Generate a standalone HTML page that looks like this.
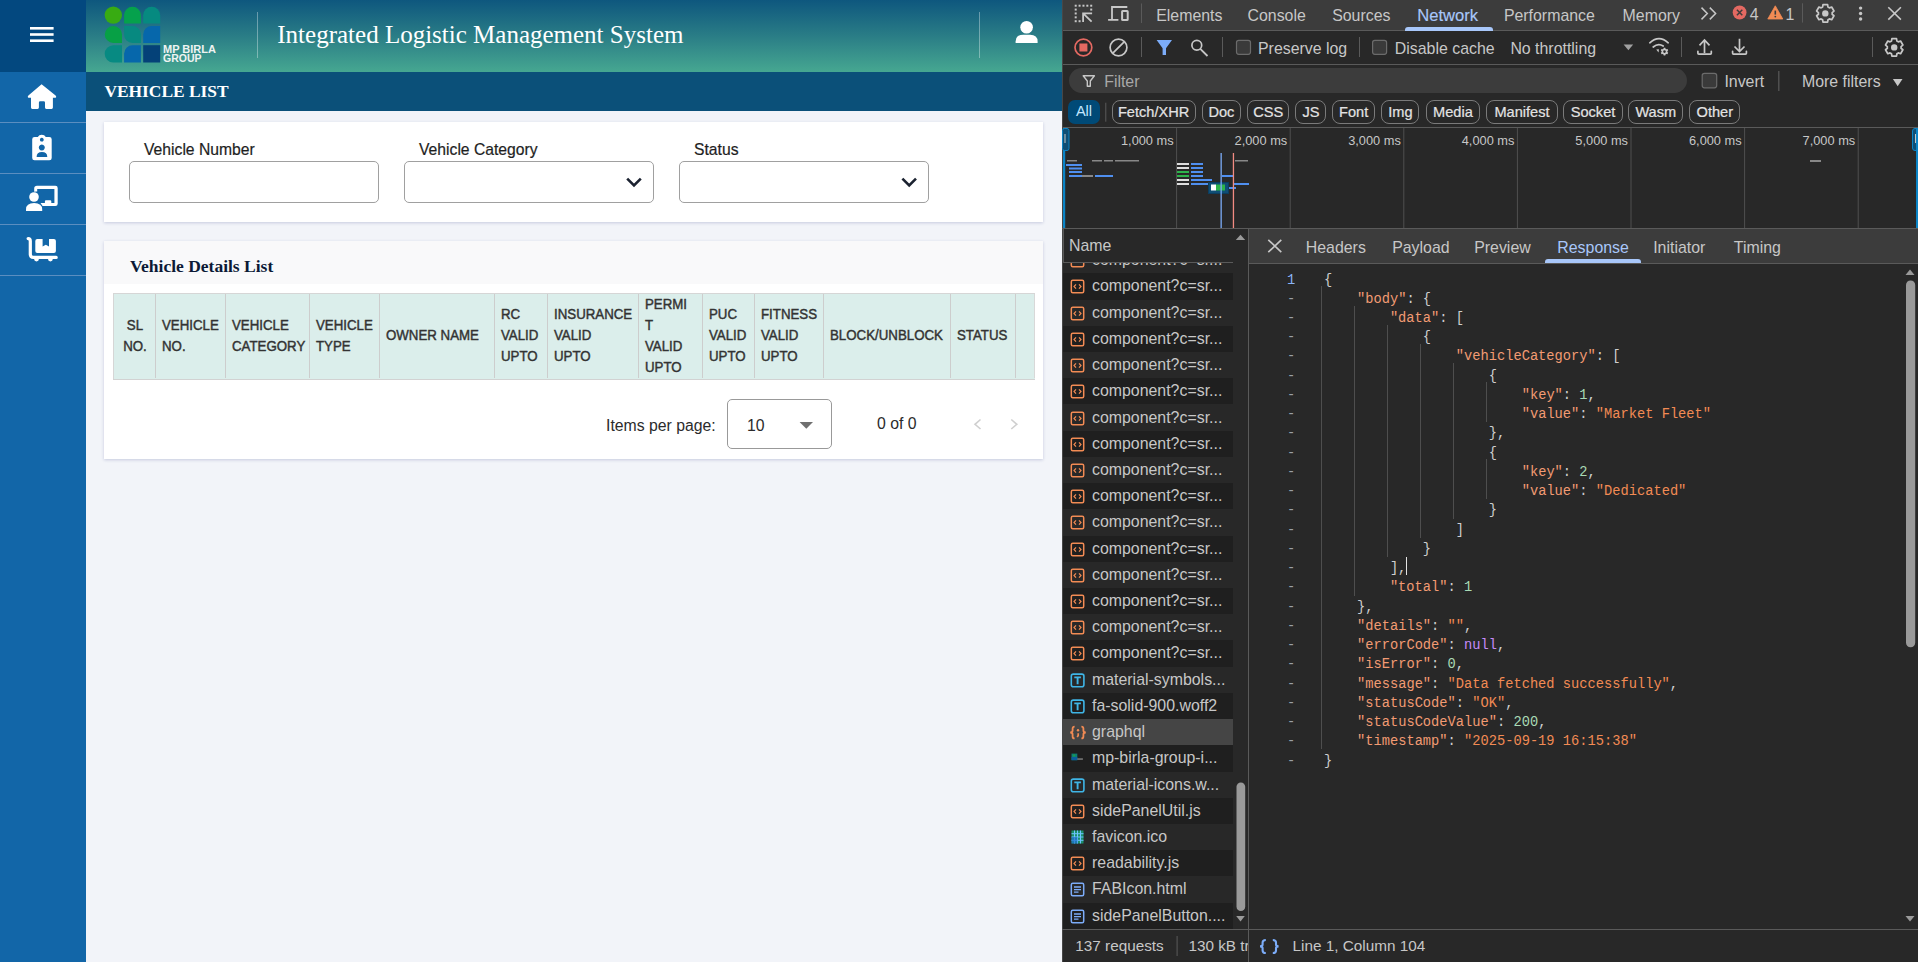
<!DOCTYPE html>
<html><head><meta charset="utf-8">
<style>
*{box-sizing:border-box;margin:0;padding:0}
html,body{width:1918px;height:962px;overflow:hidden;background:#f2f4f9;font-family:"Liberation Sans",sans-serif}
.a{position:absolute}
/* ---------- app ---------- */
#side{left:0;top:0;width:86px;height:962px;background:#1266a8}
#sidetop{left:0;top:0;width:86px;height:72px;background:#03487f}
.sep{left:0;width:86px;height:1px;background:#5b8ec0}
#hdr{left:86px;top:0;width:976px;height:72px;background:linear-gradient(#0e577e,#2a7d86 50%,#46a791)}
#ttlbar{left:86px;top:72px;width:976px;height:39px;background:#0b5079}
.title{font-family:"Liberation Serif",serif;color:#fff}
.card{background:#fff;box-shadow:0 1px 3px rgba(50,60,130,.22)}
.lbl{font-size:15.7px;color:#1e1e1e;-webkit-text-stroke:0.2px #1e1e1e}
.inp{height:42px;width:250px;border:1px solid #a0a0a0;border-radius:5px;background:#fff}
.th{position:absolute;top:293.8px;height:84px;border-right:1px solid #cdcdcd;font-weight:normal;font-size:14.6px;color:#333;line-height:21px;display:flex;align-items:center;padding-left:6px;-webkit-text-stroke:0.45px #333}
.ths{display:inline-block;transform:scaleX(.91);transform-origin:left center;white-space:nowrap}
.pg{font-size:15.8px;color:#2b2b2b;line-height:20px}
/* ---------- devtools ---------- */
#dt{left:1062px;top:0;width:856px;height:962px;background:#282828;color:#e3e3e3;font-size:15.6px}
.dtx{font-size:15.9px;line-height:20px;color:#c7c7c7;white-space:nowrap}
.chip{top:100px;height:24px;border:1px solid #7a7a7a;border-radius:8px;color:#e3e3e3;font-size:14.6px;line-height:22.4px;text-align:center;-webkit-text-stroke:0.2px #e3e3e3}
.ovl{top:133px;text-align:right;font-size:12.8px;line-height:16px;color:#c7c7c7}
.row{left:0;width:170px;height:26.15px}
.rtx{left:29px;top:3px;font-size:15.9px;line-height:20px;color:#c7c7c7;white-space:nowrap}
.mono{font-family:"Liberation Mono",monospace;font-size:13.73px;line-height:19.24px;white-space:pre;color:#cfcfcf}
</style></head><body>
<!-- sidebar -->
<div id="side" class="a"></div>
<div id="sidetop" class="a"></div>
<div class="a sep" style="top:122px"></div>
<div class="a sep" style="top:173px"></div>
<div class="a sep" style="top:224px"></div>
<div class="a sep" style="top:275px"></div>
<svg class="a" style="left:0;top:0" width="86" height="280" viewBox="0 0 86 280">
 <g fill="#fff">
  <rect x="30" y="27" width="23.6" height="2.6"/>
  <rect x="30" y="33.2" width="23.6" height="2.6"/>
  <rect x="30" y="39.4" width="23.6" height="2.6"/>
  <!-- home -->
  <path d="M41.6 84.2 L28.4 95.6 Q27.4 96.5 27.9 97.3 Q28.3 97.8 29 97.8 L31 97.8 L31 107.6 Q31 108.9 32.3 108.9 L37.6 108.9 Q38.9 108.9 38.9 107.6 L38.9 102.5 Q38.9 101.2 40.2 101.2 L43.7 101.2 Q45 101.2 45 102.5 L45 107.6 Q45 108.9 46.3 108.9 L51.6 108.9 Q52.9 108.9 52.9 107.6 L52.9 97.8 L55 97.8 Q55.7 97.8 56.1 97.3 Q56.5 96.5 55.6 95.6 Z"/>
  <!-- badge -->
  <path fill-rule="evenodd" d="M34.6 136.9 L37.8 136.9 Q39 134.8 41.8 134.8 Q44.6 134.8 45.8 136.9 L49.3 136.9 Q51.7 136.9 51.7 139.3 L51.7 157.9 Q51.7 160.3 49.3 160.3 L34.6 160.3 Q32.2 160.3 32.2 157.9 L32.2 139.3 Q32.2 136.9 34.6 136.9 Z M41.8 137.8 A1.9 1.9 0 1 0 41.81 137.8 Z M41.8 144.6 A3 3 0 1 0 41.81 144.6 Z M36.6 157 L47.3 157 Q47.3 152 41.95 152 Q36.6 152 36.6 157 Z"/>
  <!-- teacher -->
  <path fill-rule="evenodd" d="M37 185.8 L55.4 185.8 Q57.7 185.8 57.7 188.1 L57.7 203.8 Q57.7 206.1 55.4 206.1 L42.6 206.1 L40.5 203.1 L44.9 203.1 L44.9 201.3 Q44.9 200.2 46 200.2 L50.2 200.2 Q51.3 200.2 51.3 201.3 L51.3 203.1 L54.4 203.1 L54.4 189 L37.2 189 L37.2 191.6 Q35.9 191.5 34.2 191.8 L34.2 188.6 Q34.2 185.8 37 185.8 Z"/>
  <circle cx="34" cy="197" r="4.8"/>
  <path d="M26 210.9 L42.2 210.9 L42.2 209.5 Q42.2 203 34.1 203 Q26 203 26 209.5 Z"/>
  <!-- cart -->
  <path d="M28.2 237 Q31.9 237 31.9 241 L31.9 254.3 Q31.9 255.8 33.4 255.8 L56.2 255.8 Q57.8 255.8 57.8 257.4 Q57.8 259 56.2 259 L52.8 259 A2.4 2.4 0 1 1 48 259 L38.9 259 A2.4 2.4 0 1 1 34.1 259 L33.4 259 Q28.7 259 28.7 254.3 L28.7 241 Q28.7 240.2 28.2 240.2 Q26.5 240.2 26.5 238.6 Q26.5 237 28.2 237 Z"/>
  <path d="M37.3 239 L42.6 239 L42.6 246.5 L45.8 244.8 L49 246.5 L49 239 L53.9 239 Q55.9 239 55.9 241 L55.9 251 Q55.9 253 53.9 253 L37.3 253 Q35.3 253 35.3 251 L35.3 241 Q35.3 239 37.3 239 Z"/>
 </g>
</svg>

<!-- header -->
<div id="hdr" class="a"></div>
<div id="ttlbar" class="a"></div>
<svg class="a" style="left:100px;top:2px" width="125" height="66" viewBox="100 2 125 66">
 <circle cx="113.3" cy="15.1" r="8.7" fill="#38ab12"/>
 <path d="M124.1 23.6 L124.1 15.2 A8.4 8.4 0 0 1 140.9 15.2 L140.9 23.6 Z" fill="#05a14c"/>
 <path d="M143.2 23.6 L143.2 15.2 A8.5 8.5 0 0 1 160.2 15.2 L160.2 23.6 Z" fill="#068a80"/>
 <path d="M122 42.9 L113.3 42.9 A8.6 8.45 0 1 1 122 34.45 Z" fill="#07a045"/>
 <path d="M124.1 26 L132.5 26 A8.4 8.45 0 0 1 140.9 34.45 L140.9 42.9 L132.5 42.9 A8.4 8.45 0 0 1 124.1 34.45 Z" fill="#078980"/>
 <path d="M143.2 42.9 L143.2 34.5 A8.5 8.5 0 0 1 151.7 26 L160.2 26 L160.2 42.9 Z" fill="#0667ab"/>
 <path d="M122 45.2 L113.3 45.2 A8.6 8.65 0 0 0 113.3 62.5 L122 62.5 Z" fill="#078a82"/>
 <path d="M124.1 62.5 L124.1 53.7 A8.4 8.5 0 0 1 132.5 45.2 L140.9 45.2 L140.9 62.5 Z" fill="#0667ab"/>
 <rect x="143.2" y="45.2" width="17" height="17.3" fill="#044178"/>
 <text x="163" y="53" fill="#eef3f2" font-family="Liberation Sans" font-weight="bold" font-size="10.6" textLength="53" lengthAdjust="spacingAndGlyphs">MP BIRLA</text>
 <text x="163" y="62.3" fill="#eef3f2" font-family="Liberation Sans" font-weight="bold" font-size="10.6" textLength="38.5" lengthAdjust="spacingAndGlyphs">GROUP</text>
</svg>
<div class="a title" style="left:277.3px;top:20px;font-size:25px;line-height:30px">Integrated Logistic Management System</div>
<div class="a" style="left:257px;top:12px;width:1px;height:46px;background:rgba(255,255,255,.35)"></div>
<div class="a" style="left:979px;top:12px;width:1px;height:46px;background:rgba(255,255,255,.35)"></div>
<svg class="a" style="left:1010px;top:15px" width="34" height="34" viewBox="1010 15 34 34">
 <circle cx="1026.6" cy="27.2" r="6.3" fill="#fff"/>
 <path d="M1015.6 43 L1037.6 43 L1037.6 41.5 Q1037.6 34.7 1030 34.7 L1023.2 34.7 Q1015.6 34.7 1015.6 41.5 Z" fill="#fff"/>
</svg>
<div class="a title" style="left:104.4px;top:81px;font-size:17.4px;font-weight:bold;line-height:20px">VEHICLE LIST</div>

<!-- filter card -->
<div class="a card" style="left:104px;top:122px;width:939px;height:100px"></div>
<div class="a lbl" style="left:144px;top:141px">Vehicle Number</div>
<div class="a lbl" style="left:419px;top:141px">Vehicle Category</div>
<div class="a lbl" style="left:694px;top:141px">Status</div>
<div class="a inp" style="left:129px;top:161px"></div>
<div class="a inp" style="left:404px;top:161px"></div>
<div class="a inp" style="left:679px;top:161px"></div>
<svg class="a" style="left:620px;top:170px" width="30" height="24" viewBox="620 170 30 24"><path d="M627.2 178.7 L634 185.5 L640.8 178.7" fill="none" stroke="#1b2230" stroke-width="2.6"/></svg>
<svg class="a" style="left:895px;top:170px" width="30" height="24" viewBox="895 170 30 24"><path d="M902.4 178.7 L909.2 185.5 L916 178.7" fill="none" stroke="#1b2230" stroke-width="2.6"/></svg>

<!-- table card -->
<div class="a card" style="left:104px;top:241px;width:939px;height:218px"></div>
<div class="a" style="left:104px;top:241px;width:939px;height:43px;background:#f9f9fa"></div>
<div class="a title" style="left:130px;top:256px;font-size:17.5px;font-weight:bold;color:#0c1a36;line-height:20px">Vehicle Details List</div>
<div class="a" style="left:113px;top:293px;width:922px;height:87px;background:#dbeeeb;border-top:1px solid #d6d6d6;border-left:1px solid #d6d6d6;border-bottom:1px solid #c9c9c9"></div>
<div class="a" style="left:113px;top:379px;width:922px;height:1px;background:#d2d2d2"></div>
<div class="th" style="left:114px;width:42px;padding-left:0;justify-content:center;text-align:center;border-right-color:#cdcdcd"><span class="ths" style="transform-origin:center">SL<br>NO.</span></div>
<div class="th" style="left:156px;width:70px;border-right-color:#cdcdcd"><span class="ths">VEHICLE<br>NO.</span></div>
<div class="th" style="left:226px;width:84px;border-right-color:#cdcdcd"><span class="ths">VEHICLE<br>CATEGORY</span></div>
<div class="th" style="left:310px;width:70px;border-right-color:#cdcdcd"><span class="ths">VEHICLE<br>TYPE</span></div>
<div class="th" style="left:380px;width:115px;border-right-color:#cdcdcd"><span class="ths">OWNER NAME</span></div>
<div class="th" style="left:495px;width:53px;border-right-color:#cdcdcd"><span class="ths">RC<br>VALID<br>UPTO</span></div>
<div class="th" style="left:548px;width:91px;border-right-color:#cdcdcd"><span class="ths">INSURANCE<br>VALID<br>UPTO</span></div>
<div class="th" style="left:639px;width:64px;border-right-color:#cdcdcd"><span class="ths">PERMI<br>T<br>VALID<br>UPTO</span></div>
<div class="th" style="left:703px;width:52px;border-right-color:#cdcdcd"><span class="ths">PUC<br>VALID<br>UPTO</span></div>
<div class="th" style="left:755px;width:69px;border-right-color:#cdcdcd"><span class="ths">FITNESS<br>VALID<br>UPTO</span></div>
<div class="th" style="left:824px;width:127px;border-right-color:#cdcdcd"><span class="ths">BLOCK/UNBLOCK</span></div>
<div class="th" style="left:951px;width:65px;border-right-color:#cdcdcd"><span class="ths">STATUS</span></div>
<div class="th" style="left:1016px;width:19px;border-right-color:#d8d8d8"><span class="ths"></span></div>

<div class="a pg" style="left:606px;top:415.5px">Items per page:</div>
<div class="a" style="left:727px;top:399px;width:105px;height:50px;border:1px solid #999;border-radius:5px"></div>
<div class="a pg" style="left:747px;top:415.5px">10</div>
<svg class="a" style="left:795px;top:418px" width="22" height="14" viewBox="795 418 22 14"><path d="M799.6 422 L813 422 L806.3 428.8 Z" fill="#6f6f6f"/></svg>
<div class="a pg" style="left:877px;top:413.5px">0 of 0</div>
<svg class="a" style="left:965px;top:412px" width="60" height="24" viewBox="965 412 60 24"><path d="M980.5 419.5 L975 424.3 L980.5 429" fill="none" stroke="#cfcfcf" stroke-width="1.6"/><path d="M1011.3 419.5 L1016.8 424.3 L1011.3 429" fill="none" stroke="#cfcfcf" stroke-width="1.6"/></svg>

<!-- devtools -->
<div id="dt" class="a"></div>
<div class="a" style="left:1249px;top:264px;width:669px;height:665px;background:#282828"></div>
<div class="a mono" style="left:1287px;top:270.50px;color:#8ab4f8">1</div>
<div class="a mono" style="left:1324.0px;top:270.50px"><span style="color:#cfcfcf">{</span></div>
<div class="a mono" style="left:1287px;top:289.74px;color:#9aa0a6">-</div>
<div class="a mono" style="left:1357.0px;top:289.74px"><span style="color:#f29b73">"body"</span><span style="color:#cfcfcf">: {</span></div>
<div class="a mono" style="left:1287px;top:308.98px;color:#9aa0a6">-</div>
<div class="a mono" style="left:1389.9px;top:308.98px"><span style="color:#f29b73">"data"</span><span style="color:#cfcfcf">: [</span></div>
<div class="a mono" style="left:1287px;top:328.22px;color:#9aa0a6">-</div>
<div class="a mono" style="left:1422.8px;top:328.22px"><span style="color:#cfcfcf">{</span></div>
<div class="a mono" style="left:1287px;top:347.46px;color:#9aa0a6">-</div>
<div class="a mono" style="left:1455.8px;top:347.46px"><span style="color:#f29b73">"vehicleCategory"</span><span style="color:#cfcfcf">: [</span></div>
<div class="a mono" style="left:1287px;top:366.70px;color:#9aa0a6">-</div>
<div class="a mono" style="left:1488.8px;top:366.70px"><span style="color:#cfcfcf">{</span></div>
<div class="a mono" style="left:1287px;top:385.94px;color:#9aa0a6">-</div>
<div class="a mono" style="left:1521.7px;top:385.94px"><span style="color:#f29b73">"key"</span><span style="color:#cfcfcf">: </span><span style="color:#a8dab5">1</span><span style="color:#cfcfcf">,</span></div>
<div class="a mono" style="left:1287px;top:405.18px;color:#9aa0a6">-</div>
<div class="a mono" style="left:1521.7px;top:405.18px"><span style="color:#f29b73">"value"</span><span style="color:#cfcfcf">: </span><span style="color:#f28b54">"Market Fleet"</span></div>
<div class="a mono" style="left:1287px;top:424.42px;color:#9aa0a6">-</div>
<div class="a mono" style="left:1488.8px;top:424.42px"><span style="color:#cfcfcf">},</span></div>
<div class="a mono" style="left:1287px;top:443.66px;color:#9aa0a6">-</div>
<div class="a mono" style="left:1488.8px;top:443.66px"><span style="color:#cfcfcf">{</span></div>
<div class="a mono" style="left:1287px;top:462.90px;color:#9aa0a6">-</div>
<div class="a mono" style="left:1521.7px;top:462.90px"><span style="color:#f29b73">"key"</span><span style="color:#cfcfcf">: </span><span style="color:#a8dab5">2</span><span style="color:#cfcfcf">,</span></div>
<div class="a mono" style="left:1287px;top:482.14px;color:#9aa0a6">-</div>
<div class="a mono" style="left:1521.7px;top:482.14px"><span style="color:#f29b73">"value"</span><span style="color:#cfcfcf">: </span><span style="color:#f28b54">"Dedicated"</span></div>
<div class="a mono" style="left:1287px;top:501.38px;color:#9aa0a6">-</div>
<div class="a mono" style="left:1488.8px;top:501.38px"><span style="color:#cfcfcf">}</span></div>
<div class="a mono" style="left:1287px;top:520.62px;color:#9aa0a6">-</div>
<div class="a mono" style="left:1455.8px;top:520.62px"><span style="color:#cfcfcf">]</span></div>
<div class="a mono" style="left:1287px;top:539.86px;color:#9aa0a6">-</div>
<div class="a mono" style="left:1422.8px;top:539.86px"><span style="color:#cfcfcf">}</span></div>
<div class="a mono" style="left:1287px;top:559.10px;color:#9aa0a6">-</div>
<div class="a mono" style="left:1389.9px;top:559.10px"><span style="color:#cfcfcf">],</span></div>
<div class="a mono" style="left:1287px;top:578.34px;color:#9aa0a6">-</div>
<div class="a mono" style="left:1389.9px;top:578.34px"><span style="color:#f29b73">"total"</span><span style="color:#cfcfcf">: </span><span style="color:#a8dab5">1</span></div>
<div class="a mono" style="left:1287px;top:597.58px;color:#9aa0a6">-</div>
<div class="a mono" style="left:1357.0px;top:597.58px"><span style="color:#cfcfcf">},</span></div>
<div class="a mono" style="left:1287px;top:616.82px;color:#9aa0a6">-</div>
<div class="a mono" style="left:1357.0px;top:616.82px"><span style="color:#f29b73">"details"</span><span style="color:#cfcfcf">: </span><span style="color:#f28b54">""</span><span style="color:#cfcfcf">,</span></div>
<div class="a mono" style="left:1287px;top:636.06px;color:#9aa0a6">-</div>
<div class="a mono" style="left:1357.0px;top:636.06px"><span style="color:#f29b73">"errorCode"</span><span style="color:#cfcfcf">: </span><span style="color:#c58af9">null</span><span style="color:#cfcfcf">,</span></div>
<div class="a mono" style="left:1287px;top:655.30px;color:#9aa0a6">-</div>
<div class="a mono" style="left:1357.0px;top:655.30px"><span style="color:#f29b73">"isError"</span><span style="color:#cfcfcf">: </span><span style="color:#a8dab5">0</span><span style="color:#cfcfcf">,</span></div>
<div class="a mono" style="left:1287px;top:674.54px;color:#9aa0a6">-</div>
<div class="a mono" style="left:1357.0px;top:674.54px"><span style="color:#f29b73">"message"</span><span style="color:#cfcfcf">: </span><span style="color:#f28b54">"Data fetched successfully"</span><span style="color:#cfcfcf">,</span></div>
<div class="a mono" style="left:1287px;top:693.78px;color:#9aa0a6">-</div>
<div class="a mono" style="left:1357.0px;top:693.78px"><span style="color:#f29b73">"statusCode"</span><span style="color:#cfcfcf">: </span><span style="color:#f28b54">"OK"</span><span style="color:#cfcfcf">,</span></div>
<div class="a mono" style="left:1287px;top:713.02px;color:#9aa0a6">-</div>
<div class="a mono" style="left:1357.0px;top:713.02px"><span style="color:#f29b73">"statusCodeValue"</span><span style="color:#cfcfcf">: </span><span style="color:#a8dab5">200</span><span style="color:#cfcfcf">,</span></div>
<div class="a mono" style="left:1287px;top:732.26px;color:#9aa0a6">-</div>
<div class="a mono" style="left:1357.0px;top:732.26px"><span style="color:#f29b73">"timestamp"</span><span style="color:#cfcfcf">: </span><span style="color:#f28b54">"2025-09-19 16:15:38"</span></div>
<div class="a mono" style="left:1287px;top:751.50px;color:#9aa0a6">-</div>
<div class="a mono" style="left:1324.0px;top:751.50px"><span style="color:#cfcfcf">}</span></div>
<div class="a" style="left:1320.9px;top:286.2px;width:1px;height:463.3px;background:#4e4e4e"></div>
<div class="a" style="left:1353.9px;top:305.5px;width:1px;height:290.1px;background:#4e4e4e"></div>
<div class="a" style="left:1386.8px;top:324.7px;width:1px;height:232.4px;background:#4e4e4e"></div>
<div class="a" style="left:1419.8px;top:344.0px;width:1px;height:193.9px;background:#4e4e4e"></div>
<div class="a" style="left:1452.7px;top:363.2px;width:1px;height:155.4px;background:#4e4e4e"></div>
<div class="a" style="left:1485.7px;top:382.4px;width:1px;height:40.0px;background:#4e4e4e"></div>
<div class="a" style="left:1485.7px;top:459.4px;width:1px;height:40.0px;background:#4e4e4e"></div>
<div class="a" style="left:1406px;top:556.5px;width:1.2px;height:18px;background:#e3e3e3"></div>
<svg class="a" style="left:1900px;top:264px" width="18" height="665" viewBox="1900 264 18 665"><path d="M1905.5 275 L1914.5 275 L1910 269.5 Z" fill="#9a9a9a"/><rect x="1906" y="280.4" width="9.2" height="366.8" rx="4.5" fill="#9a9a9a"/><path d="M1905.5 916 L1914.5 916 L1910 921.5 Z" fill="#9a9a9a"/></svg>
<div class="a" style="left:1062px;top:0;width:856px;height:30px;background:#3c3c3c"></div>
<div class="a" style="left:1062px;top:30px;width:856px;height:1px;background:#5a5a5a"></div>
<div class="a" style="left:1062px;top:64px;width:856px;height:1px;background:#5a5a5a"></div>
<div class="a" style="left:1069px;top:68px;width:618px;height:25px;border-radius:13px;background:#3c3c3c"></div>
<div class="a" style="left:1062px;top:127px;width:856px;height:1px;background:#5a5a5a"></div>
<div class="a" style="left:1062px;top:0;width:1px;height:962px;background:#474747"></div>
<div class="a dtx" style="left:1156.2px;top:5.7px;color:#c7c7c7">Elements</div>
<div class="a dtx" style="left:1247.5px;top:5.7px;color:#c7c7c7">Console</div>
<div class="a dtx" style="left:1332.2px;top:5.7px;color:#c7c7c7">Sources</div>
<div class="a dtx" style="left:1417.2px;top:6.3px;color:#a8c7fa;font-size:16.6px;-webkit-text-stroke:0.15px #a8c7fa">Network</div>
<div class="a dtx" style="left:1503.9px;top:5.7px;color:#c7c7c7">Performance</div>
<div class="a dtx" style="left:1622.6000000000001px;top:5.7px;color:#c7c7c7">Memory</div>
<div class="a" style="left:1405px;top:26.8px;width:87.5px;height:4px;border-radius:3px 3px 0 0;background:#a8c7fa"></div>
<div class="a dtx" style="left:1749.8px;top:5px">4</div>
<div class="a dtx" style="left:1785.5px;top:5px">1</div>
<div class="a dtx" style="left:1258px;top:38.5px">Preserve log</div>
<div class="a dtx" style="left:1394.8px;top:38.5px">Disable cache</div>
<div class="a dtx" style="left:1510.4px;top:38.5px">No throttling</div>
<div class="a dtx" style="left:1104.2px;top:71.5px;color:#a8a8a8">Filter</div>
<div class="a dtx" style="left:1724.4px;top:71.5px">Invert</div>
<div class="a dtx" style="left:1802px;top:71.5px">More filters</div>
<div class="a" style="left:1068px;top:100.3px;width:32px;height:23.3px;border-radius:7px;background:#004a77;color:#c2e7ff;font-size:14.6px;line-height:23.5px;text-align:center">All</div>
<div class="a chip" style="left:1111.6px;width:84.0px">Fetch/XHR</div>
<div class="a chip" style="left:1201.7px;width:39.5px">Doc</div>
<div class="a chip" style="left:1247.2px;width:41.9px">CSS</div>
<div class="a chip" style="left:1295.4px;width:31.0px">JS</div>
<div class="a chip" style="left:1332.4px;width:42.6px">Font</div>
<div class="a chip" style="left:1381.3px;width:38.1px">Img</div>
<div class="a chip" style="left:1425.5px;width:54.9px">Media</div>
<div class="a chip" style="left:1486.4px;width:71.2px">Manifest</div>
<div class="a chip" style="left:1563.4px;width:59.3px">Socket</div>
<div class="a chip" style="left:1628.4px;width:54.8px">Wasm</div>
<div class="a chip" style="left:1689.4px;width:50.9px">Other</div>
<div class="a ovl" style="left:1073.6px;width:100px">1,000 ms</div>
<div class="a ovl" style="left:1187.2px;width:100px">2,000 ms</div>
<div class="a ovl" style="left:1300.8px;width:100px">3,000 ms</div>
<div class="a ovl" style="left:1414.4px;width:100px">4,000 ms</div>
<div class="a ovl" style="left:1528px;width:100px">5,000 ms</div>
<div class="a ovl" style="left:1641.6px;width:100px">6,000 ms</div>
<div class="a ovl" style="left:1755.2px;width:100px">7,000 ms</div>
<div class="a" style="left:1062px;top:228px;width:856px;height:1px;background:#5a5a5a"></div>
<div class="a" style="left:1249px;top:229px;width:669px;height:34px;background:#3c3c3c"></div>
<div class="a" style="left:1249px;top:263px;width:669px;height:1px;background:#5a5a5a"></div>
<div class="a" style="left:1248px;top:229px;width:1px;height:733px;background:#5a5a5a"></div>
<div class="a" style="left:1062px;top:929px;width:856px;height:1px;background:#5a5a5a"></div>
<div class="a" style="left:1063px;top:263px;width:170px;height:666px;overflow:hidden">
<div class="a row" style="top:-15.82px;background:#282828">
<svg class="a" style="left:7px;top:6px" width="15" height="15" viewBox="0 0 15 15"><rect x="1.3" y="1.3" width="12.4" height="12.4" rx="1.5" fill="none" stroke="#f28b54" stroke-width="1.5"/><path d="M6 5.3 L4 7.5 L6 9.7 M9 5.3 L11 7.5 L9 9.7" fill="none" stroke="#f28b54" stroke-width="1.2"/></svg>
<div class="a rtx">component?c=sr...</div></div>
<div class="a row" style="top:10.40px;background:#1f1f1f">
<svg class="a" style="left:7px;top:6px" width="15" height="15" viewBox="0 0 15 15"><rect x="1.3" y="1.3" width="12.4" height="12.4" rx="1.5" fill="none" stroke="#f28b54" stroke-width="1.5"/><path d="M6 5.3 L4 7.5 L6 9.7 M9 5.3 L11 7.5 L9 9.7" fill="none" stroke="#f28b54" stroke-width="1.2"/></svg>
<div class="a rtx">component?c=sr...</div></div>
<div class="a row" style="top:36.62px;background:#282828">
<svg class="a" style="left:7px;top:6px" width="15" height="15" viewBox="0 0 15 15"><rect x="1.3" y="1.3" width="12.4" height="12.4" rx="1.5" fill="none" stroke="#f28b54" stroke-width="1.5"/><path d="M6 5.3 L4 7.5 L6 9.7 M9 5.3 L11 7.5 L9 9.7" fill="none" stroke="#f28b54" stroke-width="1.2"/></svg>
<div class="a rtx">component?c=sr...</div></div>
<div class="a row" style="top:62.84px;background:#1f1f1f">
<svg class="a" style="left:7px;top:6px" width="15" height="15" viewBox="0 0 15 15"><rect x="1.3" y="1.3" width="12.4" height="12.4" rx="1.5" fill="none" stroke="#f28b54" stroke-width="1.5"/><path d="M6 5.3 L4 7.5 L6 9.7 M9 5.3 L11 7.5 L9 9.7" fill="none" stroke="#f28b54" stroke-width="1.2"/></svg>
<div class="a rtx">component?c=sr...</div></div>
<div class="a row" style="top:89.06px;background:#282828">
<svg class="a" style="left:7px;top:6px" width="15" height="15" viewBox="0 0 15 15"><rect x="1.3" y="1.3" width="12.4" height="12.4" rx="1.5" fill="none" stroke="#f28b54" stroke-width="1.5"/><path d="M6 5.3 L4 7.5 L6 9.7 M9 5.3 L11 7.5 L9 9.7" fill="none" stroke="#f28b54" stroke-width="1.2"/></svg>
<div class="a rtx">component?c=sr...</div></div>
<div class="a row" style="top:115.28px;background:#1f1f1f">
<svg class="a" style="left:7px;top:6px" width="15" height="15" viewBox="0 0 15 15"><rect x="1.3" y="1.3" width="12.4" height="12.4" rx="1.5" fill="none" stroke="#f28b54" stroke-width="1.5"/><path d="M6 5.3 L4 7.5 L6 9.7 M9 5.3 L11 7.5 L9 9.7" fill="none" stroke="#f28b54" stroke-width="1.2"/></svg>
<div class="a rtx">component?c=sr...</div></div>
<div class="a row" style="top:141.50px;background:#282828">
<svg class="a" style="left:7px;top:6px" width="15" height="15" viewBox="0 0 15 15"><rect x="1.3" y="1.3" width="12.4" height="12.4" rx="1.5" fill="none" stroke="#f28b54" stroke-width="1.5"/><path d="M6 5.3 L4 7.5 L6 9.7 M9 5.3 L11 7.5 L9 9.7" fill="none" stroke="#f28b54" stroke-width="1.2"/></svg>
<div class="a rtx">component?c=sr...</div></div>
<div class="a row" style="top:167.72px;background:#1f1f1f">
<svg class="a" style="left:7px;top:6px" width="15" height="15" viewBox="0 0 15 15"><rect x="1.3" y="1.3" width="12.4" height="12.4" rx="1.5" fill="none" stroke="#f28b54" stroke-width="1.5"/><path d="M6 5.3 L4 7.5 L6 9.7 M9 5.3 L11 7.5 L9 9.7" fill="none" stroke="#f28b54" stroke-width="1.2"/></svg>
<div class="a rtx">component?c=sr...</div></div>
<div class="a row" style="top:193.94px;background:#282828">
<svg class="a" style="left:7px;top:6px" width="15" height="15" viewBox="0 0 15 15"><rect x="1.3" y="1.3" width="12.4" height="12.4" rx="1.5" fill="none" stroke="#f28b54" stroke-width="1.5"/><path d="M6 5.3 L4 7.5 L6 9.7 M9 5.3 L11 7.5 L9 9.7" fill="none" stroke="#f28b54" stroke-width="1.2"/></svg>
<div class="a rtx">component?c=sr...</div></div>
<div class="a row" style="top:220.16px;background:#1f1f1f">
<svg class="a" style="left:7px;top:6px" width="15" height="15" viewBox="0 0 15 15"><rect x="1.3" y="1.3" width="12.4" height="12.4" rx="1.5" fill="none" stroke="#f28b54" stroke-width="1.5"/><path d="M6 5.3 L4 7.5 L6 9.7 M9 5.3 L11 7.5 L9 9.7" fill="none" stroke="#f28b54" stroke-width="1.2"/></svg>
<div class="a rtx">component?c=sr...</div></div>
<div class="a row" style="top:246.38px;background:#282828">
<svg class="a" style="left:7px;top:6px" width="15" height="15" viewBox="0 0 15 15"><rect x="1.3" y="1.3" width="12.4" height="12.4" rx="1.5" fill="none" stroke="#f28b54" stroke-width="1.5"/><path d="M6 5.3 L4 7.5 L6 9.7 M9 5.3 L11 7.5 L9 9.7" fill="none" stroke="#f28b54" stroke-width="1.2"/></svg>
<div class="a rtx">component?c=sr...</div></div>
<div class="a row" style="top:272.60px;background:#1f1f1f">
<svg class="a" style="left:7px;top:6px" width="15" height="15" viewBox="0 0 15 15"><rect x="1.3" y="1.3" width="12.4" height="12.4" rx="1.5" fill="none" stroke="#f28b54" stroke-width="1.5"/><path d="M6 5.3 L4 7.5 L6 9.7 M9 5.3 L11 7.5 L9 9.7" fill="none" stroke="#f28b54" stroke-width="1.2"/></svg>
<div class="a rtx">component?c=sr...</div></div>
<div class="a row" style="top:298.82px;background:#282828">
<svg class="a" style="left:7px;top:6px" width="15" height="15" viewBox="0 0 15 15"><rect x="1.3" y="1.3" width="12.4" height="12.4" rx="1.5" fill="none" stroke="#f28b54" stroke-width="1.5"/><path d="M6 5.3 L4 7.5 L6 9.7 M9 5.3 L11 7.5 L9 9.7" fill="none" stroke="#f28b54" stroke-width="1.2"/></svg>
<div class="a rtx">component?c=sr...</div></div>
<div class="a row" style="top:325.04px;background:#1f1f1f">
<svg class="a" style="left:7px;top:6px" width="15" height="15" viewBox="0 0 15 15"><rect x="1.3" y="1.3" width="12.4" height="12.4" rx="1.5" fill="none" stroke="#f28b54" stroke-width="1.5"/><path d="M6 5.3 L4 7.5 L6 9.7 M9 5.3 L11 7.5 L9 9.7" fill="none" stroke="#f28b54" stroke-width="1.2"/></svg>
<div class="a rtx">component?c=sr...</div></div>
<div class="a row" style="top:351.26px;background:#282828">
<svg class="a" style="left:7px;top:6px" width="15" height="15" viewBox="0 0 15 15"><rect x="1.3" y="1.3" width="12.4" height="12.4" rx="1.5" fill="none" stroke="#f28b54" stroke-width="1.5"/><path d="M6 5.3 L4 7.5 L6 9.7 M9 5.3 L11 7.5 L9 9.7" fill="none" stroke="#f28b54" stroke-width="1.2"/></svg>
<div class="a rtx">component?c=sr...</div></div>
<div class="a row" style="top:377.48px;background:#1f1f1f">
<svg class="a" style="left:7px;top:6px" width="15" height="15" viewBox="0 0 15 15"><rect x="1.3" y="1.3" width="12.4" height="12.4" rx="1.5" fill="none" stroke="#f28b54" stroke-width="1.5"/><path d="M6 5.3 L4 7.5 L6 9.7 M9 5.3 L11 7.5 L9 9.7" fill="none" stroke="#f28b54" stroke-width="1.2"/></svg>
<div class="a rtx">component?c=sr...</div></div>
<div class="a row" style="top:403.70px;background:#282828">
<svg class="a" style="left:7px;top:6px" width="15" height="15" viewBox="0 0 15 15"><rect x="1.3" y="1.1" width="12.6" height="12.6" rx="2" fill="none" stroke="#3fb5e6" stroke-width="1.6"/><path d="M4.3 4.4 H10.9 M7.6 4.4 V11.2" fill="none" stroke="#3fb5e6" stroke-width="1.9"/></svg>
<div class="a rtx">material-symbols...</div></div>
<div class="a row" style="top:429.92px;background:#1f1f1f">
<svg class="a" style="left:7px;top:6px" width="15" height="15" viewBox="0 0 15 15"><rect x="1.3" y="1.1" width="12.6" height="12.6" rx="2" fill="none" stroke="#3fb5e6" stroke-width="1.6"/><path d="M4.3 4.4 H10.9 M7.6 4.4 V11.2" fill="none" stroke="#3fb5e6" stroke-width="1.9"/></svg>
<div class="a rtx">fa-solid-900.woff2</div></div>
<div class="a row" style="top:456.14px;background:#454545">
<svg class="a" style="left:6px;top:5px" width="18" height="17" viewBox="0 0 18 17"><path d="M5.6 2.6 Q3.6 2.6 3.6 4.6 V6.6 Q3.6 8.5 1.2 8.5 Q3.6 8.5 3.6 10.4 V12.4 Q3.6 14.4 5.6 14.4 M12.4 2.6 Q14.4 2.6 14.4 4.6 V6.6 Q14.4 8.5 16.8 8.5 Q14.4 8.5 14.4 10.4 V12.4 Q14.4 14.4 12.4 14.4" fill="none" stroke="#f28b54" stroke-width="1.8"/><circle cx="9" cy="6.2" r="1.2" fill="#f28b54"/><path d="M9.2 9.2 V11.6 L8.2 13" fill="none" stroke="#f28b54" stroke-width="1.7"/></svg>
<div class="a rtx">graphql</div></div>
<div class="a row" style="top:482.36px;background:#1f1f1f">
<svg class="a" style="left:7px;top:6px" width="16" height="14" viewBox="0 0 16 14"><rect x="1.5" y="2.6" width="5.8" height="6.6" fill="#0d7f73"/><rect x="1.5" y="6" width="5.8" height="3.2" fill="#0b5d9c"/><rect x="3" y="3.5" width="2" height="2" fill="#1d9a4a"/><rect x="7.3" y="7.4" width="5.6" height="1.3" fill="#8a8a8a"/></svg>
<div class="a rtx">mp-birla-group-i...</div></div>
<div class="a row" style="top:508.58px;background:#282828">
<svg class="a" style="left:7px;top:6px" width="15" height="15" viewBox="0 0 15 15"><rect x="1.3" y="1.1" width="12.6" height="12.6" rx="2" fill="none" stroke="#3fb5e6" stroke-width="1.6"/><path d="M4.3 4.4 H10.9 M7.6 4.4 V11.2" fill="none" stroke="#3fb5e6" stroke-width="1.9"/></svg>
<div class="a rtx">material-icons.w...</div></div>
<div class="a row" style="top:534.80px;background:#1f1f1f">
<svg class="a" style="left:7px;top:6px" width="15" height="15" viewBox="0 0 15 15"><rect x="1.3" y="1.3" width="12.4" height="12.4" rx="1.5" fill="none" stroke="#f28b54" stroke-width="1.5"/><path d="M6 5.3 L4 7.5 L6 9.7 M9 5.3 L11 7.5 L9 9.7" fill="none" stroke="#f28b54" stroke-width="1.2"/></svg>
<div class="a rtx">sidePanelUtil.js</div></div>
<div class="a row" style="top:561.02px;background:#282828">
<svg class="a" style="left:8px;top:6px" width="14" height="15" viewBox="0 0 14 15"><rect x="0.5" y="0.5" width="12" height="13" fill="#1b8f6b"/><path d="M3.5 0.5 V13.5 M6.5 0.5 V13.5 M9.5 0.5 V13.5 M0.5 3.7 H12.5 M0.5 7 H12.5 M0.5 10.3 H12.5" stroke="#6ec3ff" stroke-width="1"/><rect x="0.5" y="7" width="6" height="6.5" fill="#1f6fd0" opacity=".7"/></svg>
<div class="a rtx">favicon.ico</div></div>
<div class="a row" style="top:587.24px;background:#1f1f1f">
<svg class="a" style="left:7px;top:6px" width="15" height="15" viewBox="0 0 15 15"><rect x="1.3" y="1.3" width="12.4" height="12.4" rx="1.5" fill="none" stroke="#f28b54" stroke-width="1.5"/><path d="M6 5.3 L4 7.5 L6 9.7 M9 5.3 L11 7.5 L9 9.7" fill="none" stroke="#f28b54" stroke-width="1.2"/></svg>
<div class="a rtx">readability.js</div></div>
<div class="a row" style="top:613.46px;background:#282828">
<svg class="a" style="left:7px;top:6px" width="15" height="15" viewBox="0 0 15 15"><rect x="1.3" y="1.3" width="12.4" height="12.4" rx="1.5" fill="none" stroke="#7cacf8" stroke-width="1.5"/><path d="M4 5 H11 M4 7.6 H11 M4 10.2 H8.5" stroke="#7cacf8" stroke-width="1.3"/></svg>
<div class="a rtx">FABIcon.html</div></div>
<div class="a row" style="top:639.68px;background:#1f1f1f">
<svg class="a" style="left:7px;top:6px" width="15" height="15" viewBox="0 0 15 15"><rect x="1.3" y="1.3" width="12.4" height="12.4" rx="1.5" fill="none" stroke="#7cacf8" stroke-width="1.5"/><path d="M4 5 H11 M4 7.6 H11 M4 10.2 H8.5" stroke="#7cacf8" stroke-width="1.3"/></svg>
<div class="a rtx">sidePanelButton....</div></div>
</div>
<div class="a" style="left:1063px;top:228px;width:170px;height:35px;background:#282828;border:1px solid #5a5a5a;border-right:0"></div>
<div class="a dtx" style="left:1069px;top:236px">Name</div>
<div class="a dtx" style="left:1305.8px;top:237.7px;color:#c7c7c7">Headers</div>
<div class="a dtx" style="left:1392.2px;top:237.7px;color:#c7c7c7">Payload</div>
<div class="a dtx" style="left:1474.2px;top:237.7px;color:#c7c7c7">Preview</div>
<div class="a dtx" style="left:1557.3px;top:237.7px;color:#a8c7fa">Response</div>
<div class="a dtx" style="left:1653.2px;top:237.7px;color:#c7c7c7">Initiator</div>
<div class="a dtx" style="left:1733.8px;top:237.7px;color:#c7c7c7">Timing</div>
<div class="a" style="left:1545px;top:259px;width:96px;height:4px;border-radius:3px 3px 0 0;background:#a8c7fa"></div>
<div class="a dtx" style="left:1075.3px;top:936px;font-size:15.3px">137 requests</div>
<div class="a" style="left:1188.4px;top:936px;width:59.6px;overflow:hidden;white-space:nowrap;font-size:15.3px;line-height:20px;color:#c7c7c7">130 kB transferred</div>
<div class="a dtx" style="left:1292.5px;top:936px;font-size:15.3px">Line 1, Column 104</div>
<svg class="a" style="left:0;top:0" width="1918" height="962" viewBox="0 0 1918 962"><rect x="1074.70" y="4.70" width="2" height="2" fill="#c7c7c7"/><rect x="1078.58" y="4.70" width="2" height="2" fill="#c7c7c7"/><rect x="1082.46" y="4.70" width="2" height="2" fill="#c7c7c7"/><rect x="1086.34" y="4.70" width="2" height="2" fill="#c7c7c7"/><rect x="1090.22" y="4.70" width="2" height="2" fill="#c7c7c7"/><rect x="1074.70" y="8.58" width="2" height="2" fill="#c7c7c7"/><rect x="1074.70" y="12.46" width="2" height="2" fill="#c7c7c7"/><rect x="1074.70" y="16.34" width="2" height="2" fill="#c7c7c7"/><rect x="1074.70" y="20.22" width="2" height="2" fill="#c7c7c7"/><rect x="1090.22" y="8.58" width="2" height="2" fill="#c7c7c7"/><rect x="1078.58" y="20.22" width="2" height="2" fill="#c7c7c7"/><path d="M1083.1 21.9 V13.4 H1092.1 M1083.1 13.4 L1091.6 21.6" stroke="#c7c7c7" stroke-width="1.8" fill="none"/><path d="M1112 20 V7 H1127.3 M1108.1 19.9 H1118.4" stroke="#c7c7c7" stroke-width="1.8" fill="none"/><rect x="1122.1" y="10.9" width="5.6" height="9.2" rx="0.6" stroke="#c7c7c7" stroke-width="2" fill="none"/><rect x="1141" y="3.5" width="1" height="19.5" fill="#5a5a5a"/><path d="M1701.5 7.6 L1707.3 13.5 L1701.5 19.4 M1709.8 7.6 L1715.6 13.5 L1709.8 19.4" stroke="#c7c7c7" stroke-width="1.5" fill="none"/><circle cx="1739.6" cy="12.5" r="6.9" fill="#e46962"/><path d="M1736.9 9.8 L1742.3 15.2 M1742.3 9.8 L1736.9 15.2" stroke="#3c3c3c" stroke-width="1.5"/><path d="M1775.3 5.8 L1782.8 19 L1767.8 19 Z" fill="#f28b54" stroke="#f28b54" stroke-width="0.8" stroke-linejoin="round"/><path d="M1775.3 10.6 V14.6" stroke="#3c3c3c" stroke-width="1.6"/><circle cx="1775.3" cy="16.6" r="0.9" fill="#3c3c3c"/><rect x="1802" y="3.3" width="1" height="19.3" fill="#5a5a5a"/><path d="M1822.61 7.04 L1822.99 4.70 L1827.61 4.70 L1827.99 7.04 L1828.75 7.42 L1829.46 7.90 L1831.68 7.05 L1833.99 11.05 L1832.15 12.55 L1832.20 13.40 L1832.15 14.25 L1833.99 15.75 L1831.68 19.75 L1829.46 18.90 L1828.75 19.38 L1827.99 19.76 L1827.61 22.10 L1822.99 22.10 L1822.61 19.76 L1821.85 19.38 L1821.14 18.90 L1818.92 19.75 L1816.61 15.75 L1818.45 14.25 L1818.40 13.40 L1818.45 12.55 L1816.61 11.05 L1818.92 7.05 L1821.14 7.90 L1821.85 7.42 Z" fill="none" stroke="#c7c7c7" stroke-width="1.7" stroke-linejoin="round"/><circle cx="1825.3" cy="13.4" r="3.2" fill="#c7c7c7"/><circle cx="1860.6" cy="8.1" r="1.7" fill="#c7c7c7"/><circle cx="1860.6" cy="13.5" r="1.7" fill="#c7c7c7"/><circle cx="1860.6" cy="19" r="1.7" fill="#c7c7c7"/><path d="M1888.3 7.2 L1900.9 19.6 M1900.9 7.2 L1888.3 19.6" stroke="#c7c7c7" stroke-width="1.6"/><circle cx="1083.4" cy="47.5" r="8.4" fill="none" stroke="#e46962" stroke-width="1.7"/><rect x="1079.4" y="43.5" width="8" height="8" fill="#e46962"/><circle cx="1118.5" cy="47.5" r="8.4" fill="none" stroke="#c7c7c7" stroke-width="1.7"/><path d="M1112.6 53.4 L1124.4 41.6" stroke="#c7c7c7" stroke-width="1.7"/><rect x="1141" y="37" width="1" height="20" fill="#5a5a5a"/><path d="M1156.6 40 L1172 40 L1166 48.3 L1166 55 L1162.6 55 L1162.6 48.3 Z" fill="#7cacf8"/><circle cx="1196.8" cy="45.3" r="4.9" fill="none" stroke="#c7c7c7" stroke-width="1.7"/><path d="M1200.3 48.8 L1207.5 56" stroke="#c7c7c7" stroke-width="1.8"/><rect x="1222" y="37" width="1" height="20" fill="#5a5a5a"/><rect x="1236.5" y="40.3" width="14" height="14" rx="2.2" fill="#3a3a3a" stroke="#6b6b6b" stroke-width="1.2"/><rect x="1359" y="37" width="1" height="20" fill="#5a5a5a"/><rect x="1372.6" y="40.3" width="14" height="14" rx="2.2" fill="#3a3a3a" stroke="#6b6b6b" stroke-width="1.2"/><path d="M1623.6 44.6 L1633.2 44.6 L1628.4 50.2 Z" fill="#a0a0a0"/><path d="M1649.8 42.8 Q1659 34.6 1668.2 42.8" stroke="#c7c7c7" stroke-width="1.7" fill="none" stroke-linecap="round"/><path d="M1653.2 47 Q1658.2 42.6 1663.2 46" stroke="#c7c7c7" stroke-width="1.7" fill="none" stroke-linecap="round"/><path d="M1656.2 49.6 L1658.9 49.2 L1658.6 52.6 Z" fill="#c7c7c7"/><path d="M1663.32 48.95 L1663.73 47.78 L1665.27 47.78 L1665.68 48.95 L1666.20 49.25 L1667.42 49.02 L1668.20 50.36 L1667.38 51.30 L1667.38 51.90 L1668.20 52.84 L1667.42 54.18 L1666.20 53.95 L1665.68 54.25 L1665.27 55.42 L1663.73 55.42 L1663.32 54.25 L1662.80 53.95 L1661.58 54.18 L1660.80 52.84 L1661.62 51.90 L1661.62 51.30 L1660.80 50.36 L1661.58 49.02 L1662.80 49.25 Z M1665.8 51.6 A1.3 1.3 0 1 0 1663.2 51.6 A1.3 1.3 0 1 0 1665.8 51.6 Z" fill="#c7c7c7" fill-rule="evenodd"/><rect x="1681" y="37" width="1" height="20" fill="#5a5a5a"/><path d="M1704.5 53 V40.5 M1699.5 45.3 L1704.5 40 L1709.5 45.3" stroke="#c7c7c7" stroke-width="1.7" fill="none"/><path d="M1697.9 51.3 V53.2 Q1697.9 54.1 1698.8 54.1 H1710.4 Q1711.3 54.1 1711.3 53.2 V51.3" stroke="#c7c7c7" stroke-width="1.7" fill="none" stroke-linecap="round"/><path d="M1739.5 38.8 V51.3 M1734.5 46.5 L1739.5 51.6 L1744.5 46.5" stroke="#c7c7c7" stroke-width="1.7" fill="none"/><path d="M1732.6 51.3 V53.2 Q1732.6 54.1 1733.5 54.1 H1745.5 Q1746.4 54.1 1746.4 53.2 V51.3" stroke="#c7c7c7" stroke-width="1.7" fill="none" stroke-linecap="round"/><rect x="1872" y="37" width="1" height="20" fill="#5a5a5a"/><path d="M1891.51 41.04 L1891.89 38.70 L1896.51 38.70 L1896.89 41.04 L1897.65 41.42 L1898.36 41.90 L1900.58 41.05 L1902.89 45.05 L1901.05 46.55 L1901.10 47.40 L1901.05 48.25 L1902.89 49.75 L1900.58 53.75 L1898.36 52.90 L1897.65 53.38 L1896.89 53.76 L1896.51 56.10 L1891.89 56.10 L1891.51 53.76 L1890.75 53.38 L1890.04 52.90 L1887.82 53.75 L1885.51 49.75 L1887.35 48.25 L1887.30 47.40 L1887.35 46.55 L1885.51 45.05 L1887.82 41.05 L1890.04 41.90 L1890.75 41.42 Z" fill="none" stroke="#c7c7c7" stroke-width="1.7" stroke-linejoin="round"/><circle cx="1894.2" cy="47.4" r="3.2" fill="#c7c7c7"/><path d="M1083.2 75.8 L1094.4 75.8 L1090.3 81 L1090.3 86.3 L1087.3 86.3 L1087.3 81 Z" fill="none" stroke="#c7c7c7" stroke-width="1.4" stroke-linejoin="round"/><rect x="1702.2" y="73.3" width="14.5" height="14.5" rx="2.2" fill="#3a3a3a" stroke="#6b6b6b" stroke-width="1.2"/><rect x="1778.2" y="71" width="1.2" height="20" fill="#5a5a5a"/><path d="M1892.9 79 L1902.5 79 L1897.7 86.3 Z" fill="#c7c7c7"/><rect x="1105.3" y="102.7" width="1" height="19" fill="#5a5a5a"/><rect x="1176.1" y="128" width="1" height="100" fill="#4f4f4f"/><rect x="1289.7" y="128" width="1" height="100" fill="#4f4f4f"/><rect x="1403.3" y="128" width="1" height="100" fill="#4f4f4f"/><rect x="1516.9" y="128" width="1" height="100" fill="#4f4f4f"/><rect x="1630.5" y="128" width="1" height="100" fill="#4f4f4f"/><rect x="1744.1" y="128" width="1" height="100" fill="#4f4f4f"/><rect x="1857.7" y="128" width="1" height="100" fill="#4f4f4f"/><rect x="1063" y="128" width="2.2" height="100" fill="#0a84c6"/><rect x="1062.5" y="128.5" width="6.5" height="22" rx="2" fill="#0f4e75" stroke="#0a84c6" stroke-width="1"/><rect x="1064.5" y="134" width="1" height="9" fill="#c7c7c7"/><rect x="1912.5" y="128.5" width="8" height="22" rx="2.5" fill="#0f4e75" stroke="#0a84c6" stroke-width="1"/><rect x="1915" y="134" width="1" height="9" fill="#c7c7c7"/><rect x="1916" y="128" width="2" height="100" fill="#0a84c6"/><rect x="1067" y="160" width="10" height="1.5" fill="#888"/><rect x="1092" y="160" width="10" height="1.5" fill="#888"/><rect x="1104" y="160" width="9" height="1.5" fill="#888"/><rect x="1115" y="160" width="24" height="1.5" fill="#888"/><rect x="1066" y="164" width="16" height="2" fill="#4f8ff0"/><rect x="1069" y="167.5" width="13" height="2.0" fill="#4f8ff0"/><rect x="1069" y="171" width="13" height="2" fill="#4f8ff0"/><rect x="1069" y="175" width="13" height="2" fill="#4f8ff0"/><rect x="1082" y="175" width="11" height="2" fill="#888"/><rect x="1095" y="175" width="18" height="2" fill="#4f8ff0"/><rect x="1177" y="163" width="12" height="2" fill="#ddd"/><rect x="1191" y="163" width="12" height="2" fill="#4f8ff0"/><rect x="1177" y="167" width="12" height="2" fill="#ddd"/><rect x="1191" y="167" width="12" height="2" fill="#4f8ff0"/><rect x="1177" y="171" width="12" height="2" fill="#2db34a"/><rect x="1191" y="171" width="12" height="2" fill="#4f8ff0"/><rect x="1177" y="175" width="12" height="2" fill="#2db34a"/><rect x="1191" y="175" width="12" height="2" fill="#4f8ff0"/><rect x="1177" y="179" width="12" height="2" fill="#ddd"/><rect x="1191" y="179" width="21" height="2" fill="#4f8ff0"/><rect x="1177" y="183" width="12" height="2" fill="#ddd"/><rect x="1191" y="183" width="17" height="2" fill="#4f8ff0"/><rect x="1222" y="175" width="11" height="2" fill="#4f8ff0"/><rect x="1235" y="160" width="13" height="1.5" fill="#888"/><rect x="1233" y="183" width="16" height="2" fill="#4f8ff0"/><rect x="1228" y="187" width="8" height="2" fill="#4f8ff0"/><rect x="1208.5" y="182.5" width="20" height="11" fill="#0f4e75" stroke="#0c3d5e"/><rect x="1211" y="184.5" width="5" height="6" fill="#fff"/><rect x="1216" y="184.5" width="9" height="6" fill="#2db34a"/><rect x="1220.5" y="153" width="1.3" height="75" fill="#7cacf8"/><rect x="1232.8" y="153" width="1.3" height="75" fill="#f28b82"/><rect x="1810" y="160" width="11" height="2" fill="#888"/><path d="M1235.8 240 L1245.2 240 L1240.5 234.8 Z" fill="#9a9a9a"/><rect x="1236.5" y="782.4" width="8.7" height="128.6" rx="4.3" fill="#9a9a9a"/><path d="M1236.2 916 L1244.8 916 L1240.5 921.5 Z" fill="#9a9a9a"/><path d="M1268.3 239.8 L1281.3 252.2 M1281.3 239.8 L1268.3 252.2" stroke="#c7c7c7" stroke-width="1.6"/><rect x="1176.6" y="936" width="1" height="20" fill="#5a5a5a"/><path d="M1265.8 940 Q1262.6 940 1262.6 942.6 V944.6 Q1262.6 946.4 1260 946.4 Q1262.6 946.4 1262.6 948.2 V950.4 Q1262.6 953 1265.8 953 M1272.8 940 Q1276 940 1276 942.6 V944.6 Q1276 946.4 1278.6 946.4 Q1276 946.4 1276 948.2 V950.4 Q1276 953 1272.8 953" fill="none" stroke="#7cacf8" stroke-width="2.1"/></svg>
</body></html>
